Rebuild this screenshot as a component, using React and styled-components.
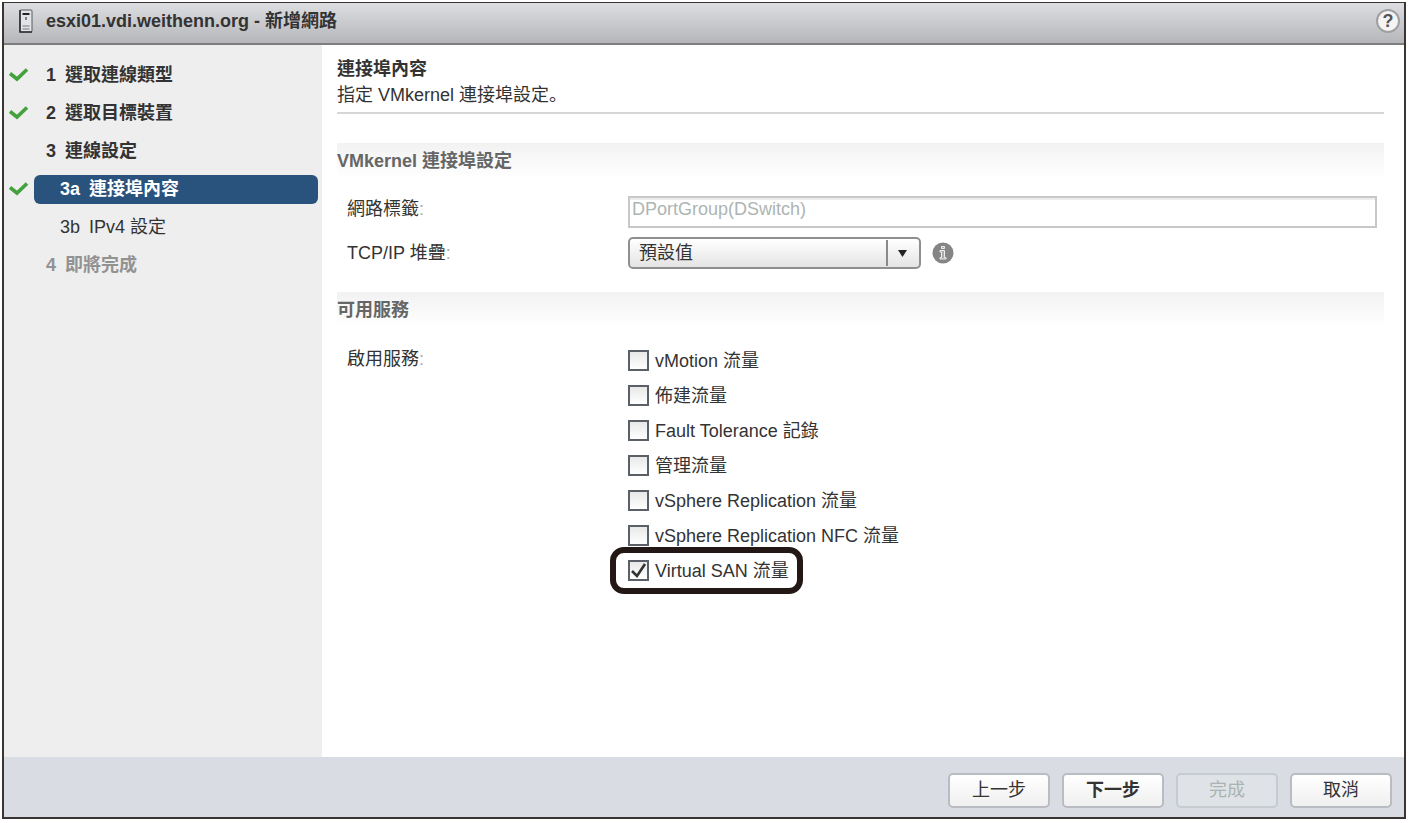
import { useState } from "react";
import styled, { createGlobalStyle } from "styled-components";

const steps = [
  { no: "1", label: "選取連線類型", done: true, bold: true },
  { no: "2", label: "選取目標裝置", done: true, bold: true },
  { no: "3", label: "連線設定", bold: true },
  { no: "3a", label: "連接埠內容", done: true, bold: true, sub: true, active: true },
  { no: "3b", label: "IPv4 設定", sub: true },
  { no: "4", label: "即將完成", bold: true, disabled: true },
];

const services = [
  { id: "vmotion", label: "vMotion 流量" },
  { id: "provisioning", label: "佈建流量" },
  { id: "ft", label: "Fault Tolerance 記錄" },
  { id: "management", label: "管理流量" },
  { id: "replication", label: "vSphere Replication 流量" },
  { id: "nfc", label: "vSphere Replication NFC 流量" },
  { id: "vsan", label: "Virtual SAN 流量", marked: true },
];

const HostIcon = () => (
  <svg width="14" height="24" viewBox="0 0 14 24" aria-hidden="true">
    <rect x="1" y="1" width="12" height="22" rx="1" fill="#e2e3e6" stroke="#5a5a5a" />
    <path d="M1 1v22h12" fill="none" stroke="#2e2e2e" strokeWidth="1.6" />
    <path d="M3.5 5h7" stroke="#222" strokeWidth="2" />
    <path d="M7 8v3" stroke="#555" strokeWidth="1.4" />
    <path d="M3.5 17h7M3.5 20h7" stroke="#777" />
  </svg>
);

const CheckIcon = () => (
  <svg width="20" height="14" viewBox="0 0 20 14" aria-hidden="true">
    <path d="M1 5.5l7 5.5L18 1.5" fill="none" stroke="#43a23c" strokeWidth="3.6" />
  </svg>
);

const InfoIcon = () => (
  <svg width="22" height="22" viewBox="0 0 22 22" role="img" aria-label="資訊">
    <circle cx="11" cy="11" r="10.5" fill="#858585" />
    <path
      d="M9.5 4.5h3v2h-3zM8 8.5h4.5v7H14v1.5H8v-1.5h1.5v-5.5H8z"
      fill="#a9a9a9"
      stroke="#ededed"
    />
  </svg>
);

const App = () => {
  const [checked, setChecked] = useState({ vsan: true });

  const onToggle = (id) => {
    setChecked({ ...checked, [id]: !checked[id] });
  };

  return (
    <>
      <GlobalStyle />
      <Page>
        <Dialog>
          <Header>
            <HostIcon />
            <Title>esxi01.vdi.weithenn.org - 新增網路</Title>
            <HelpButton type="button">?</HelpButton>
          </Header>
          <Body>
            <Steps>
              {steps.map((step) => (
                <Step key={step.no}>
                  <StepMark>{step.done && <CheckIcon />}</StepMark>
                  <StepLink
                    href="#"
                    $bold={step.bold}
                    $sub={step.sub}
                    $active={step.active}
                    $disabled={step.disabled}
                  >
                    <StepNo $sub={step.sub}>{step.no}</StepNo>
                    {step.label}
                  </StepLink>
                </Step>
              ))}
            </Steps>
            <Main>
              <PageTitle>連接埠內容</PageTitle>
              <Description>指定 VMkernel 連接埠設定。</Description>

              <SectionTitle>VMkernel 連接埠設定</SectionTitle>
              <Fields>
                <Field>
                  <Label htmlFor="network-label" $top>
                    網路標籤<Colon>:</Colon>
                  </Label>
                  <TextInput id="network-label" defaultValue="DPortGroup(DSwitch)" disabled />
                </Field>
                <Field>
                  <Label htmlFor="stack">
                    TCP/IP 堆疊<Colon>:</Colon>
                  </Label>
                  <SelectBox>
                    <Select id="stack">
                      <option>預設值</option>
                    </Select>
                    <SelectArrow width="34" height="26" viewBox="0 0 34 26" aria-hidden="true">
                      <path d="M1 0v26" stroke="#8a8a8a" strokeWidth="2" />
                      <path d="M12 10h9l-4.5 7z" fill="#222" />
                    </SelectArrow>
                  </SelectBox>
                  <InfoIcon />
                </Field>
              </Fields>

              <SectionTitle>可用服務</SectionTitle>
              <ServiceField>
                <Legend id="services">
                  啟用服務<Colon>:</Colon>
                </Legend>
                <Services role="group" aria-labelledby="services">
                  {services.map((service) => (
                    <Service key={service.id} $marked={service.marked}>
                      <Checkbox
                        type="checkbox"
                        checked={!!checked[service.id]}
                        onChange={() => onToggle(service.id)}
                      />
                      {service.label}
                    </Service>
                  ))}
                </Services>
              </ServiceField>
            </Main>
          </Body>
          <Footer>
            <Button type="button">上一步</Button>
            <Button type="button" $bold>
              下一步
            </Button>
            <Button type="button" disabled>
              完成
            </Button>
            <Button type="button">取消</Button>
          </Footer>
        </Dialog>
      </Page>
    </>
  );
};

export default App;

const GlobalStyle = createGlobalStyle`
  * {
    box-sizing: border-box;
  }

  body {
    margin: 0;
    background: #fff;
    color: #333;
    font-family: "Liberation Sans", "Noto Sans CJK TC", sans-serif;
    font-size: 18px;
    line-height: 26px;
  }

  input, select, button {
    font: inherit;
    color: inherit;
  }
`;

const Page = styled.div`
  display: flex;
  min-height: 100vh;
  padding: 2px 3px 4px 2px;
`;

const Dialog = styled.div`
  flex: 1;
  display: flex;
  flex-direction: column;
  border: 2px solid #3a3433;
  border-top-width: 1px;
`;

const Header = styled.header`
  display: flex;
  align-items: center;
  gap: 13px;
  height: 42px;
  padding: 0 4px 4px 15px;
  border-bottom: 2px solid #7d7d7d;
  background: linear-gradient(#dddee2, #b5b6ba);
`;

const Title = styled.h1`
  flex: 1;
  margin: 0;
  font-size: 18px;
  font-weight: bold;
`;

const HelpButton = styled.button`
  width: 24px;
  height: 24px;
  padding: 0;
  border: 2px solid #a0a0a0;
  border-radius: 50%;
  background: #f4f4f4;
  color: #555;
  font-weight: bold;
  line-height: 20px;
`;

const Body = styled.div`
  flex: 1;
  display: flex;
`;

const Steps = styled.ol`
  flex: none;
  width: 318px;
  margin: 0;
  padding: 11px 4px 0 5px;
  background: #eee;
  list-style: none;
`;

const Step = styled.li`
  display: flex;
  align-items: center;
  height: 38px;
`;

const StepMark = styled.span`
  display: flex;
  width: 25px;
`;

const StepLink = styled.a`
  flex: 1;
  display: flex;
  height: 29px;
  padding-left: ${({ $sub }) => ($sub ? "26px" : "12px")};
  border-radius: 6px;
  background: ${({ $active }) => ($active ? "#29527c" : "none")};
  color: ${({ $active, $disabled }) => ($active ? "#fff" : $disabled ? "#929292" : "#333")};
  font-weight: ${({ $bold }) => ($bold ? "bold" : "normal")};
  line-height: 29px;
  text-decoration: none;
`;

const StepNo = styled.span`
  width: ${({ $sub }) => ($sub ? "29px" : "19px")};
`;

const Main = styled.main`
  flex: 1;
  padding: 11px 20px 0 15px;
`;

const PageTitle = styled.h2`
  margin: 0;
  font-size: 18px;
`;

/* the SC face sets the full stop low and to the left */
const Description = styled.p`
  margin: 0 0 29px;
  padding-bottom: 4px;
  border-bottom: 2px solid #d6d6d6;
  font-family: "Liberation Sans", "Noto Sans CJK SC", sans-serif;
`;

const SectionTitle = styled.h3`
  margin: 0;
  padding: 4px 0;
  background: linear-gradient(#f2f2f2, #fff);
  color: #666;
  font-size: 18px;
  line-height: 28px;
`;

const Fields = styled.div`
  display: flex;
  flex-direction: column;
  gap: 9px;
  padding: 17px 7px 23px 10px;
`;

const Field = styled.div`
  display: flex;
  align-items: center;
  height: 32px;
`;

const Label = styled.label`
  flex: none;
  align-self: ${({ $top }) => ($top ? "flex-start" : "center")};
  width: 281px;
`;

const Colon = styled.span`
  color: #aaa;
`;

const TextInput = styled.input`
  flex: 1;
  height: 32px;
  padding: 0 2px 6px;
  border: 2px solid #c8c8c8;
  border-radius: 0;
  background: linear-gradient(#ededed 2px, #fff 2px);
  color: #adb5b3;
`;

const SelectBox = styled.div`
  position: relative;
  width: 293px;
  margin-right: 11px;
`;

const Select = styled.select`
  display: block;
  width: 100%;
  height: 32px;
  padding: 0 40px 0 9px;
  appearance: none;
  border: 2px solid #8f8f8f;
  border-radius: 5px;
  background: linear-gradient(#fff, #e4e4e4);
`;

const SelectArrow = styled.svg`
  position: absolute;
  top: 3px;
  right: 1px;
  pointer-events: none;
`;

const ServiceField = styled.div`
  display: flex;
  padding: 15px 0 0 10px;
`;

const Legend = styled.div`
  flex: none;
  width: 281px;
  padding-top: 3px;
`;

const Services = styled.div`
  display: flex;
  flex-direction: column;
  align-items: flex-start;
`;

const Service = styled.label`
  position: relative;
  display: flex;
  align-items: center;
  gap: 6px;
  height: 35px;

  &::after {
    content: "";
    display: ${({ $marked }) => ($marked ? "block" : "none")};
    position: absolute;
    inset: -6px -14px -6px -18px;
    border: 6px solid #231815;
    border-radius: 14px;
    pointer-events: none;
  }
`;

const checkMark = `url("data:image/svg+xml,%3Csvg xmlns='http://www.w3.org/2000/svg' viewBox='0 0 17 17'%3E%3Cpath d='M2 9l5 5 8-12' fill='none' stroke='%23333' stroke-width='2.6'/%3E%3C/svg%3E")`;

const Checkbox = styled.input`
  width: 21px;
  height: 21px;
  margin: 0;
  appearance: none;
  border: 2px solid #596068;
  background: linear-gradient(#e8e8e8, #fff);

  &:checked {
    background: ${checkMark} center / 17px no-repeat, linear-gradient(#e8e8e8, #fff);
  }
`;

const Footer = styled.footer`
  display: flex;
  align-items: center;
  justify-content: flex-end;
  gap: 12px;
  height: 60px;
  padding: 6px 12px 0;
  background: #d9dce3;
`;

const Button = styled.button`
  width: 102px;
  height: 35px;
  padding: 0;
  border: 2px solid #b9bcc0;
  border-radius: 5px;
  background: linear-gradient(#fff, #f0f0f0);
  font-weight: ${({ $bold }) => ($bold ? "bold" : "normal")};

  &:disabled {
    border-color: #c6cbcf;
    background: #dfe2e6;
    color: #aab2b2;
  }
`;
